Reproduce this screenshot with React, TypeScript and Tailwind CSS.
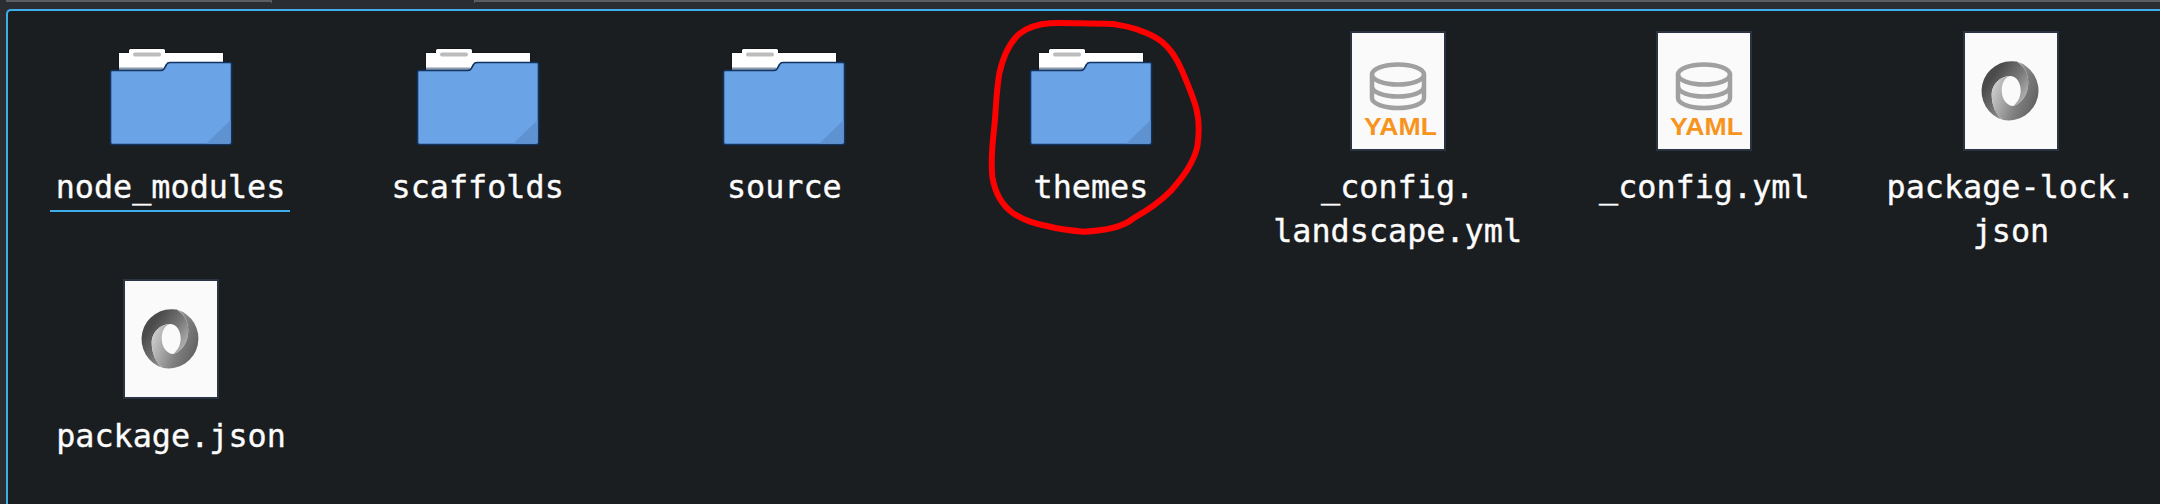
const files = [
  { lines: ["node_modules"], icon: "folder", selected: true },
  { lines: ["scaffolds"], icon: "folder" },
  { lines: ["source"], icon: "folder" },
  { lines: ["themes"], icon: "folder" },
  { lines: ["_config.", "landscape.yml"], icon: "yaml" },
  { lines: ["_config.yml"], icon: "yaml" },
  { lines: ["package-lock.", "json"], icon: "json" },
  { lines: ["package.json"], icon: "json", lower: true },
];

function FolderIcon() {
  return (
    <svg width="124" height="98" viewBox="0 0 124 98" className="mt-[17px]">
      <path d="M9.5 24V4.5H19.5V2Q19.5 0.5 21 0.5H55Q56.5 0.5 56.5 2V4.5H114.5V24Z" fill="#111315" />
      <path d="M10 22V5H20V2.5Q20 1 21.5 1H54.5Q56 1 56 2.5V5H114V22Z" fill="#ffffff" />
      <rect x="24" y="4.5" width="28" height="4" rx="2" fill="#bcbcbc" />
      <rect x="10" y="19.5" width="44" height="2.5" fill="#8a9ab0" />
      <path
        d="M3 22.5H52Q54.5 22.5 55.5 20L57.5 16.5Q58.5 14.5 61 14.5H121Q122.5 14.5 122.5 16V94.5Q122.5 96.5 120.5 96.5H3.5Q1.5 96.5 1.5 94.5V24Q1.5 22.5 3 22.5Z"
        fill="#6aa3e6"
        stroke="#11335f"
        strokeWidth="1.6"
      />
      <path d="M121.7 72L97 95.7H120Q121.7 95.7 121.7 94Z" fill="#5f92d0" />
    </svg>
  );
}

function FileFrame({ children }: { children: React.ReactNode }) {
  return (
    <div className="w-[96px] h-[120px] border-2 border-[#2a3342] bg-[#fafafa]">
      <svg width="92" height="116" viewBox="2 2 92 116" className="block">
        {children}
      </svg>
    </div>
  );
}

function YamlIcon() {
  return (
    <FileFrame>
      <g fill="none" stroke="#a0a0a0" strokeWidth="4.5">
        <ellipse cx="48" cy="43.5" rx="26" ry="10" />
        <path d="M22 43.5V67C22 72.5 33.6 77 48 77S74 72.5 74 67V43.5" />
        <path d="M22 55.5C22 61 33.6 65.5 48 65.5S74 61 74 55.5" />
      </g>
      <text
        x="14"
        y="104"
        textLength="73"
        lengthAdjust="spacingAndGlyphs"
        fill="#f7941d"
        fontSize="23.5"
        fontWeight="700"
        fontFamily='"Liberation Sans", sans-serif'
      >
        YAML
      </text>
    </FileFrame>
  );
}

function JsonIcon({ id }: { id: string }) {
  return (
    <FileFrame>
      <defs>
        <linearGradient id={`${id}-a`} gradientUnits="userSpaceOnUse" x1="32" y1="42" x2="66" y2="66">
          <stop offset="0" stopColor="#4b4b4b" />
          <stop offset="0.5" stopColor="#777777" />
          <stop offset="1" stopColor="#b8b8b8" />
        </linearGradient>
        <linearGradient id={`${id}-b`} gradientUnits="userSpaceOnUse" x1="30" y1="60" x2="76" y2="76">
          <stop offset="0" stopColor="#c8c8c8" />
          <stop offset="0.55" stopColor="#808080" />
          <stop offset="1" stopColor="#5c5c5c" />
        </linearGradient>
      </defs>
      <path
        d="M40.3 89A30 30 0 0 1 53.7 30.6C60 35 65.3 41 65.3 52C65.3 64 58 73 50.3 75C55 71 57.7 66 57.7 59.5C57.7 51 53 45 47 45C39 45 28.7 52 28.7 64C28.7 74 33 84 40.3 89Z"
        fill={`url(#${id}-a)`}
      />
      <path
        d="M53.7 30.6A30 30 0 0 1 40.3 89C33 84 28.7 74 28.7 64C28.7 52 39 45 47 45C42 46.5 38.7 52 38.7 59.5C38.7 68 44 75 50.3 75C58 73 65.3 64 65.3 52C65.3 41 60 35 53.7 30.6Z"
        fill={`url(#${id}-b)`}
      />
    </FileFrame>
  );
}

export default function App() {
  return (
    <div className="w-[2160px] h-[504px] overflow-hidden bg-[#2a2e32] relative font-['DejaVu_Sans_Mono',monospace]">
      {/* strip of the toolbar above */}
      <div className="h-[9px] flex items-start pl-[6px]">
        <div className="w-[266px] h-[3px] border-t-2 border-r border-[#5b5e61]" />
        <div className="ml-[202px] flex-1 h-[3px] border-t-2 border-l border-[#5b5e61]" />
      </div>

      <div className="ml-[6px] h-[495px] border-l-2 border-t-2 border-[#3daee9] rounded-tl-[5px] bg-[#1b1e20] pl-[43px] pt-[20px]">
        <div className="grid grid-cols-[repeat(7,240px)] auto-rows-[248px] gap-x-[66.67px]">
          {files.map((f, i) => (
            <div key={i} className="flex flex-col items-center">
              <div className="h-[120px] flex justify-center">
                {f.icon === "folder" && <FolderIcon />}
                {f.icon === "yaml" && <YamlIcon />}
                {f.icon === "json" && <JsonIcon id={`json${i}`} />}
              </div>
              <div className={`${f.lower ? "mt-[15px]" : "mt-[14px]"} w-full flex flex-col items-center text-[31.8px] leading-[44px] text-[#fcfcfc] [-webkit-text-stroke:0.35px_#fcfcfc] whitespace-nowrap ${f.selected ? "-ml-[2px] pl-[1px] pb-[1px] border-b-2 border-[#3daee9]" : ""}`}>
                {f.lines.map((l) => (
                  <span key={l}>{l}</span>
                ))}
              </div>
            </div>
          ))}
        </div>
      </div>

      {/* red marker circle scribbled over the screenshot */}
      <svg viewBox="0 0 900 750" className="absolute left-[960px] top-0 w-[300px] h-[250px] pointer-events-none">
        <path
          d="M270 70C300 68 330 70 460 72C490 78 520 82 540 92C565 100 585 110 605 125C630 145 650 175 665 210C680 245 700 290 710 330C718 365 718 400 712 440C700 490 670 530 630 575C600 605 565 630 520 655C490 680 440 692 370 695C340 693 320 690 290 685C250 675 200 668 160 640C125 615 105 580 97 530C92 480 97 430 103 380C108 330 108 280 118 220C128 175 145 130 180 100C205 82 240 72 270 70Z"
          fill="none"
          stroke="#ff0000"
          strokeWidth="18"
          strokeLinejoin="round"
        />
      </svg>
    </div>
  );
}
